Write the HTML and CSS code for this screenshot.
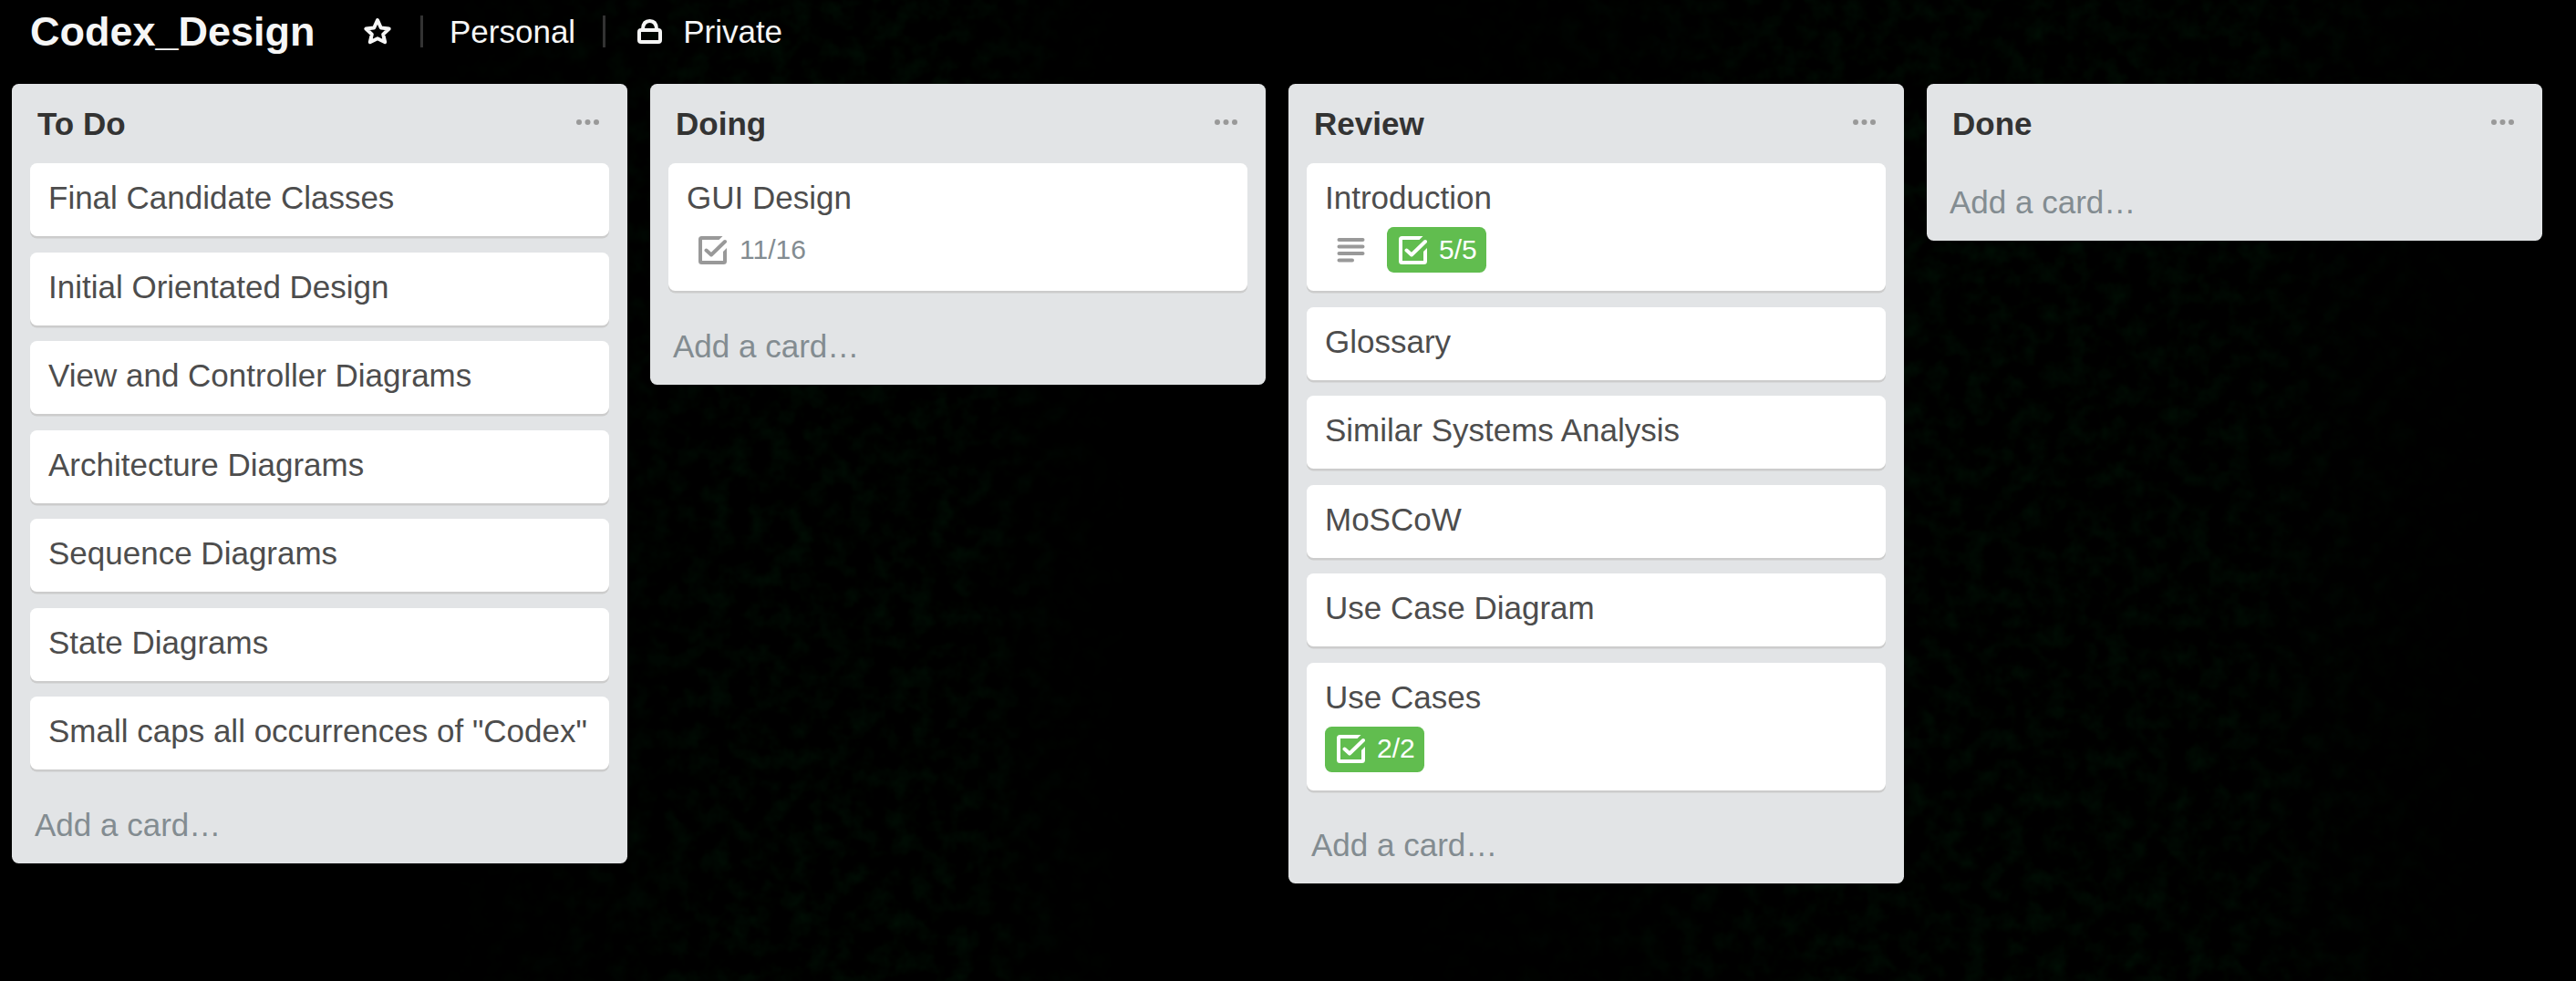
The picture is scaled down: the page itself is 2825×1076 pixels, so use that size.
FILE: index.html
```html
<!DOCTYPE html>
<html lang="en">
<head>
<meta charset="utf-8">
<title>Codex_Design</title>
<link rel="stylesheet" href="styles.css">
</head>
<body>
<svg class="sprite" aria-hidden="true">
  <symbol id="check" viewBox="0 0 31 31"><path d="M26.500 0H3.500Q0 0 0 3.500V27.500Q0 31 3.500 31H27.500Q31 31 31 27.500V13L27 17V27H4V4H22.500Z"/><path class="tick" d="M8.500 15.500L14 20.500L29 6"/></symbol>
  <symbol id="dots" viewBox="0 0 25 6"><circle cx="3" cy="3" r="3"/><circle cx="12.500" cy="3" r="3"/><circle cx="22" cy="3" r="3"/></symbol>
</svg>
<svg class="backdrop" aria-hidden="true">
  <filter id="texture" x="0" y="0" width="100%" height="100%" color-interpolation-filters="sRGB">
    <feTurbulence type="fractalNoise" baseFrequency="0.045" numOctaves="3" seed="4"/>
    <feColorMatrix values="0 0 0 0 0  0 0.28 0 0 -0.11  0 0.1 0 0 -0.045  0 0 0 0 1"/>
  </filter>
  <rect width="100%" height="100%" filter="url(#texture)"/>
</svg>
<header class="board-header">
  <h1 class="board-name">Codex_Design</h1>
  <svg class="star" viewBox="0 0 32 31"><path d="M16 3L19.800 11.500L28.700 12.500L22.200 18.600L24.200 27.200L16 23.200L7.800 27.200L9.800 18.600L3.300 12.500L12.200 11.500Z"/></svg>
  <span class="divider"></span>
  <span class="header-text">Personal</span>
  <span class="divider"></span>
  <svg class="lock" viewBox="0 0 27 27"><rect x="2" y="12" width="23" height="13" rx="2"/><path d="M6 12V10.500Q6.500 2 13.500 2T21 10.500V12"/></svg>
  <span class="header-text">Private</span>
</header>
<main class="board">
  <section class="list">
    <header class="list-header"><h2>To Do</h2><svg class="menu"><use href="#dots"/></svg></header>
    <div class="cards">
      <article class="card">Final Candidate Classes</article>
      <article class="card">Initial Orientated Design</article>
      <article class="card">View and Controller Diagrams</article>
      <article class="card">Architecture Diagrams</article>
      <article class="card">Sequence Diagrams</article>
      <article class="card">State Diagrams</article>
      <article class="card">Small caps all occurrences of "Codex"</article>
    </div>
    <a class="add-card">Add a card…</a>
  </section>
  <section class="list">
    <header class="list-header"><h2>Doing</h2><svg class="menu"><use href="#dots"/></svg></header>
    <div class="cards">
      <article class="card">GUI Design
        <div class="badges"><span class="badge"><svg class="icon"><use href="#check"/></svg><span class="count">11/16</span></span></div>
      </article>
    </div>
    <a class="add-card">Add a card…</a>
  </section>
  <section class="list">
    <header class="list-header"><h2>Review</h2><svg class="menu"><use href="#dots"/></svg></header>
    <div class="cards">
      <article class="card">Introduction
        <div class="badges">
          <span class="badge badge-description"><svg class="icon" viewBox="0 0 31 31"><path d="M2.500 4H28.500M2.500 11.500H28.500M2.500 19H28.500M2.500 26.500H17"/></svg></span>
          <span class="badge complete"><svg class="icon"><use href="#check"/></svg><span class="count">5/5</span></span>
        </div>
      </article>
      <article class="card">Glossary</article>
      <article class="card">Similar Systems Analysis</article>
      <article class="card">MoSCoW</article>
      <article class="card">Use Case Diagram</article>
      <article class="card">Use Cases
        <div class="badges"><span class="badge complete"><svg class="icon"><use href="#check"/></svg><span class="count">2/2</span></span></div>
      </article>
    </div>
    <a class="add-card">Add a card…</a>
  </section>
  <section class="list">
    <header class="list-header"><h2>Done</h2><svg class="menu"><use href="#dots"/></svg></header>
    <div class="cards"></div>
    <a class="add-card">Add a card…</a>
  </section>
</main>
</body>
</html>
```
FILE: styles.css
```css
* { box-sizing: border-box; }
body {
  margin: 0;
  height: 1076px;
  overflow: hidden;
  background: #000;
  font-family: "Liberation Sans", Arial, sans-serif;
  font-size: 35px;
  line-height: 45px;
  color: #4d4d4d;
}
h1, h2 { margin: 0; }
.sprite { display: none; }
/* faint green texture behind the board, fading to black between the bands */
.backdrop {
  position: absolute;
  inset: 0;
  z-index: -1;
  width: 100%;
  height: 100%;
  opacity: 0.36;
  -webkit-mask-image: linear-gradient(90deg, transparent 450px, #000 800px, #000 1050px, transparent 1250px, transparent 1500px, #000 2000px, #000 2450px, transparent 2750px);
  mask-image: linear-gradient(90deg, transparent 450px, #000 800px, #000 1050px, transparent 1250px, transparent 1500px, #000 2000px, #000 2450px, transparent 2750px);
}

.board-header {
  display: flex;
  align-items: flex-start;
  height: 92px;
  padding-left: 33px;
  color: #f6f6f6;
}
.board-name { width: 365px; font-size: 45px; line-height: 50px; padding-top: 10px; }
.star { width: 32px; height: 31px; margin-top: 19px; fill: none; stroke: #f6f6f6; stroke-width: 4; stroke-linejoin: round; }
.divider { width: 3px; height: 35px; margin: 17px 30px 0 31px; background: #333; }
.divider + .header-text { margin-left: -1px; }
.header-text { padding-top: 12px; }
.header-text + .divider { margin-left: 30px; }
.lock { width: 27px; height: 27px; margin: 21px 23px 0 5px; fill: none; stroke: #f6f6f6; stroke-width: 4; }

.board { display: flex; align-items: flex-start; gap: 25px; padding-left: 13px; }
.list {
  flex: none;
  width: 675px;
  padding: 0 20px 17px;
  border-radius: 7.5px;
  background: #e2e4e6;
}
.list-header { display: flex; justify-content: space-between; height: 87px; padding: 21px 11px 0 8px; color: #333; }
.list-header h2 { font-size: 35px; line-height: 45px; }
.menu { width: 25px; height: 6px; margin-top: 18px; fill: #999; }

.card {
  min-height: 80px;
  margin-bottom: 17.5px;
  padding: 15px 20px 10px;
  border-radius: 7.5px;
  background: #fff;
  box-shadow: 0 2.5px 0 #ccc;
}
.badges { display: flex; gap: 10px; margin: 10px 0 10px; }
.badge {
  display: flex;
  align-items: center;
  height: 50px;
  padding: 0 10px 0 13px;
  border-radius: 7.5px;
  font-size: 30px;
  color: #838c91;
}
.badge-description { padding-right: 14px; }
.icon { width: 31px; height: 31px; margin-right: 14px; color: #999; fill: currentColor; }
.badge-description .icon { margin-right: 0; stroke: currentColor; stroke-width: 4; stroke-linecap: round; }
.tick { fill: none; stroke: currentColor; stroke-width: 4; stroke-linecap: round; stroke-linejoin: round; }
.complete { background: #61bd4f; color: #fff; }
.complete .icon { margin-right: 13px; color: #fff; }
.count { padding-bottom: 2px; }

.add-card { display: block; height: 68px; padding: 20px 5px 0; color: #838c91; }
```
